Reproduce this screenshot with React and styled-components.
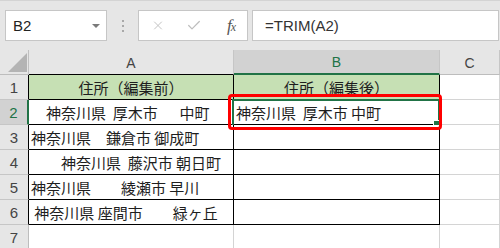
import React from "react";
import styled, { createGlobalStyle } from "styled-components";
import { X, Check } from "lucide-react";

const GREEN = "#217346";

const GlobalStyle = createGlobalStyle`
  * { box-sizing: border-box; }
  html, body { margin: 0; padding: 0; background: #ffffff; }
  body { width: 500px; height: 248px; overflow: hidden; }
`;

const Frame = styled.div`
  width: 500px;
  height: 248px;
  overflow: hidden;
  background: #ffffff;
`;

const Toolbar = styled.div`
  height: 50px;
  background: #e6e6e6;
  border-top: 1px solid #d4d4d4;
  display: flex;
  align-items: flex-start;
  padding: 9px 1px 0 5px;
`;

const Box = styled.div`
  height: 31px;
  background: #ffffff;
  border: 1px solid #c6c6c6;
  display: flex;
  align-items: center;
`;

const NameBox = styled(Box)`
  width: 102px;
  padding: 0 6px 0 7px;
  font-family: "Liberation Sans", Arial, sans-serif;
  font-size: 15px;
  color: #222;
`;

const Caret = styled.span`
  margin-left: auto;
  width: 0;
  height: 0;
  border-left: 4px solid transparent;
  border-right: 4px solid transparent;
  border-top: 4px solid #7a7a7a;
`;

const Grip = styled.div`
  width: 31px;
  height: 31px;
  display: flex;
  flex-direction: column;
  align-items: center;
  justify-content: center;
  gap: 3px;
  span {
    width: 2px;
    height: 2px;
    background: #a8a8a8;
  }
`;

const FuncBox = styled(Box)`
  width: 110px;
  padding-left: 12px;
  color: #bdbdbd;
`;

const FuncSlot = styled.span`
  width: ${(p) => p.$w}px;
  display: flex;
  justify-content: center;
  align-items: center;
`;

const Fx = styled.span`
  font-family: "Liberation Serif", "Times New Roman", serif;
  font-style: italic;
  font-size: 17px;
  color: #555;
  letter-spacing: -1px;
  small {
    font-size: 12px;
  }
`;

const Formula = styled(Box)`
  flex: 1;
  margin-left: 4px;
  padding-left: 12px;
  font-family: "Liberation Sans", Arial, sans-serif;
  font-size: 15px;
  color: #333;
`;

const Sheet = styled.div`
  display: grid;
  grid-template-columns: 29px 205px 206px 60px;
  grid-auto-rows: 25px;
`;

const Corner = styled.div`
  background: #e6e6e6;
  border-right: 1px solid #c0c0c0;
  border-bottom: 1px solid #bdbdbd;
  position: relative;
  &::after {
    content: "";
    position: absolute;
    right: 1px;
    bottom: 2px;
    width: 0;
    height: 0;
    border-left: 19px solid transparent;
    border-bottom: 19px solid #b4b4b4;
  }
`;

const ColHead = styled.div`
  background: ${(p) => (p.$active ? "#d2d2d2" : "#e6e6e6")};
  color: ${(p) => (p.$active ? GREEN : "#444")};
  border-right: 1px solid #c6c6c6;
  border-bottom: ${(p) => (p.$active ? `2px solid ${GREEN}` : `1px solid ${p.$edge || "#bdbdbd"}`)};
  display: flex;
  align-items: center;
  justify-content: center;
  font-family: "Liberation Sans", Arial, sans-serif;
  font-size: 14px;
  padding-top: 1px;
`;

const RowHead = styled.div`
  background: ${(p) => (p.$active ? "#d2d2d2" : "#e6e6e6")};
  color: ${(p) => (p.$active ? GREEN : "#444")};
  border-right: ${(p) => (p.$active ? `2px solid ${GREEN}` : `1px solid ${p.$edge || "#bdbdbd"}`)};
  border-bottom: 1px solid #c6c6c6;
  display: flex;
  align-items: center;
  justify-content: center;
  font-family: "Liberation Sans", Arial, sans-serif;
  font-size: 15px;
`;

const Cell = styled.div`
  position: relative;
  background: ${(p) => p.$bg || "#ffffff"};
  border-right: 1px solid ${(p) => (p.$boxed ? "#000" : "#d4d4d4")};
  border-bottom: 1px solid ${(p) => (p.$boxed ? "#000" : "#d4d4d4")};
  display: flex;
  align-items: center;
  justify-content: ${(p) => (p.$center ? "center" : "flex-start")};
  padding-left: ${(p) => (p.$center ? 0 : 2)}px;
  font-family: "Noto Sans CJK JP", "Noto Sans", sans-serif;
  font-size: 15px;
  color: #1e1e1e;
  white-space: pre;
`;

const Selection = styled.div`
  position: absolute;
  left: -2px;
  top: -1px;
  right: -1px;
  bottom: -3px;
  border: 2px solid ${GREEN};
  pointer-events: none;
`;

const Handle = styled.span`
  position: absolute;
  right: -2px;
  bottom: -2px;
  width: 7px;
  height: 7px;
  background: ${GREEN};
  border-left: 1px solid #fff;
  border-top: 1px solid #fff;
`;

const Callout = styled.div`
  position: absolute;
  left: -6px;
  top: -6px;
  right: -3px;
  bottom: -6px;
  border: 3px solid #ff0000;
  border-radius: 4px;
  z-index: 2;
  pointer-events: none;
`;

const rows = [
  { n: 1, a: "住所（編集前）", b: "住所（編集後）", header: true },
  { n: 2, a: "　神奈川県  厚木市　  中町", b: "神奈川県  厚木市 中町", active: true },
  { n: 3, a: "神奈川県　鎌倉市 御成町" },
  { n: 4, a: "　　神奈川県  藤沢市 朝日町" },
  { n: 5, a: "神奈川県　　綾瀬市 早川" },
  { n: 6, a: " 神奈川県 座間市　　緑ヶ丘" },
];

export default function App() {
  return (
    <Frame>
      <GlobalStyle />
      <Toolbar>
        <NameBox>
          B2
          <Caret />
        </NameBox>
        <Grip>
          <span />
          <span />
          <span />
        </Grip>
        <FuncBox>
          <FuncSlot $w={14}>
            <X size={15} strokeWidth={1.6} />
          </FuncSlot>
          <FuncSlot $w={21} />
          <FuncSlot $w={16}>
            <Check size={17} strokeWidth={1.8} />
          </FuncSlot>
          <FuncSlot $w={22} />
          <FuncSlot $w={14}>
            <Fx>
              f<small>x</small>
            </Fx>
          </FuncSlot>
        </FuncBox>
        <Formula>=TRIM(A2)</Formula>
      </Toolbar>
      <Sheet>
        <Corner />
        <ColHead $edge="#000">A</ColHead>
        <ColHead $active>B</ColHead>
        <ColHead>C</ColHead>
        {rows.map((r) => (
          <React.Fragment key={r.n}>
            <RowHead $active={r.active} $edge="#000">
              {r.n}
            </RowHead>
            <Cell $boxed $center={r.header} $bg={r.header ? "#c6e0b4" : undefined}>
              {r.a}
            </Cell>
            <Cell $boxed $center={r.header} $bg={r.header ? "#c6e0b4" : undefined}>
              {r.b || ""}
              {r.active && (
                <>
                  <Selection>
                    <Handle />
                  </Selection>
                  <Callout />
                </>
              )}
            </Cell>
            <Cell />
          </React.Fragment>
        ))}
        <RowHead>7</RowHead>
        <Cell />
        <Cell />
        <Cell />
      </Sheet>
    </Frame>
  );
}
